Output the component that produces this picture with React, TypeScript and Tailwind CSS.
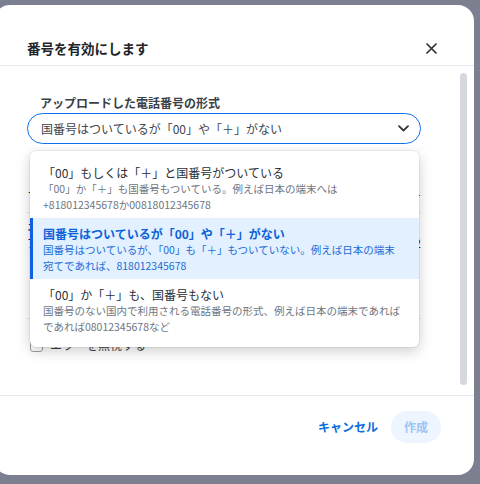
import React from "react";

function Item({
  title,
  desc,
  selected,
}: {
  title: string;
  desc: string[];
  selected?: boolean;
}) {
  return (
    <div
      className={
        selected
          ? "border-l-[3px] border-[#0e5fe3] bg-[#e2f0ff] pl-[10px] pr-[10px] pt-2 pb-[5px]"
          : "border-l-[3px] border-transparent pl-[10px] pr-[10px] pt-2 pb-[5px]"
      }
    >
      <div
        className={
          selected
            ? "text-[12px] leading-[16px] font-bold text-[#0c62d8] whitespace-nowrap"
            : "text-[12px] leading-[16px] text-[#2a2e35] whitespace-nowrap"
        }
      >
        {title}
      </div>
      {desc.map((d, i) => (
        <div
          key={i}
          className={
            selected
              ? "text-[10.5px] leading-[16px] text-[#1c6cd6] whitespace-nowrap"
              : "text-[10.5px] leading-[16px] text-[#6f7580] whitespace-nowrap"
          }
        >
          {d}
        </div>
      ))}
    </div>
  );
}

export default function App() {
  return (
    <div className="w-[480px] h-[484px] overflow-hidden bg-[#7b7f8f] font-['Noto_Sans_CJK_JP','Noto_Sans',sans-serif]">
      <div className="ml-[-6px] mt-[5px] w-[480px] h-[470px] bg-white rounded-[16px] flex flex-col">
        {/* header */}
        <div className="flex items-center justify-between pl-[33px] pr-[37px] pt-[33px] pb-[7px] border-b border-[#e6e8eb]">
          <div className="text-[13.5px] leading-[20px] font-bold text-[#222428]">
            番号を有効にします
          </div>
          <svg width="11" height="11" viewBox="0 0 11 11" fill="none">
            <path
              d="M1 1L10 10M10 1L1 10"
              stroke="#2f3237"
              strokeWidth="1.7"
              strokeLinecap="round"
            />
          </svg>
        </div>

        {/* body */}
        <div className="flex-1 flex min-h-0">
          <div className="flex-1 pl-[33px] pt-[29px] min-w-0">
            <div className="w-[394px]">
              <div className="pl-[13px] text-[12px] leading-[16px] font-bold text-[#3b3f46]">
                アップロードした電話番号の形式
              </div>
              <div className="relative mt-[2px]">
                <div className="h-[31px] rounded-full border border-[#0e72ed] flex items-center justify-between pl-[13px] pr-[11px]">
                  <span className="text-[12px] text-[#40444b] whitespace-nowrap">
                    国番号はついているが「00」や「＋」がない
                  </span>
                  <svg width="11" height="7" viewBox="0 0 11 7" fill="none">
                    <path
                      d="M1 1.2L5.5 5.5L10 1.2"
                      stroke="#33363b"
                      strokeWidth="1.8"
                      strokeLinecap="round"
                      strokeLinejoin="round"
                    />
                  </svg>
                </div>

                {/* content behind dropdown */}
                <div className="mt-[44px] flex items-center justify-between text-[12px] leading-[16px] text-[#2a2e35]">
                  <span>フ</span>
                  <span>ロー</span>
                </div>
                <div className="mt-[8px] border-t border-[#e3e5e8]" />
                <div className="mt-[7px] flex justify-between text-[12px] leading-[15px] text-[#2a2e35]">
                  <span>ネ</span>
                </div>
                <div className="flex justify-between text-[12px] leading-[15px] text-[#2a2e35]">
                  <span>ア</span>
                  <span>2</span>
                </div>
                <div className="mt-[68px] border-t border-[#e3e5e8]" />
                <div className="mt-[17px] flex items-center gap-[7px] pl-[3px]">
                  <div className="w-[13px] h-[13px] rounded-[3px] border border-[#9aa0a8]" />
                  <span className="text-[12px] text-[#3b3f46]">エラーを無視する</span>
                </div>

                {/* dropdown */}
                <div className="absolute left-[3px] top-[38px] w-[389px] bg-white rounded-[6px] shadow-[0_4px_14px_rgba(0,0,0,0.2)] ring-1 ring-black/5 pt-[6px] pb-[7px] overflow-hidden">
                  <Item
                    title="「00」もしくは「＋」と国番号がついている"
                    desc={[
                      "「00」か「＋」も国番号もついている。例えば日本の端末へは",
                      "+818012345678か00818012345678",
                    ]}
                  />
                  <Item
                    selected
                    title="国番号はついているが「00」や「＋」がない"
                    desc={[
                      "国番号はついているが、「00」も「＋」もついていない。例えば日本の端末",
                      "宛てであれば、818012345678",
                    ]}
                  />
                  <Item
                    title="「00」か「＋」も、国番号もない"
                    desc={[
                      "国番号のない国内で利用される電話番号の形式、例えば日本の端末であれば",
                      "であれば08012345678など",
                    ]}
                  />
                </div>
              </div>
            </div>
          </div>
          <div className="pr-[7px] pt-[7px] pb-[10px] flex">
            <div className="w-[7px] rounded-full bg-[#d5d8dd]" />
          </div>
        </div>

        {/* footer */}
        <div className="border-t border-[#e6e8eb] h-[80px] pt-[15px] pr-[33px] flex justify-end items-start gap-[13px]">
          <div className="h-[32px] flex items-center text-[12px] font-bold text-[#0b6ce0]">
            キャンセル
          </div>
          <div className="h-[32px] px-[13px] rounded-full bg-[#edf5ff] flex items-center text-[12px] font-bold text-[#9bc6f5]">
            作成
          </div>
        </div>
      </div>
    </div>
  );
}
